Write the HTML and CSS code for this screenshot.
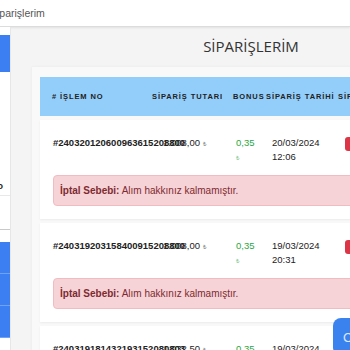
FILE: index.html
```
<!DOCTYPE html>
<html lang="tr">

<head>
    <meta charset="UTF-8">
    <meta name="viewport" content="width=device-width, initial-scale=1.0">
    <title>Siparişlerim</title>
    <link rel="stylesheet" href="styles.css">
</head>

<body>
    <header class="topbar">
        <span class="topbar-title">Siparişlerim</span>
    </header>

    <div class="layout">
        <aside class="sidebar">
            <div class="side-item side-active"></div>
            <div class="side-link">Logo</div>
            <div class="side-rule"></div>
            <div class="side-item side-blue"></div>
            <div class="side-item side-blue"></div>
            <div class="side-item side-blue"></div>
        </aside>

        <main class="content">
            <h1 class="page-title">SİPARİŞLERİM</h1>

            <div class="orders">
                <div class="orders-head">
                    <div># İşlem No</div>
                    <div>Sipariş Tutarı</div>
                    <div>Bonus</div>
                    <div>Sipariş Tarihi</div>
                    <div>Sipariş Durumu</div>
                </div>

                <div class="order">
                    <div class="order-cells">
                        <div class="order-no">#240320120600963615208800</div>
                        <div class="order-amount">1.008,00 <small>₺</small></div>
                        <div class="order-bonus">0,35<br><small>₺</small></div>
                        <div class="order-date">20/03/2024<br>12:06</div>
                        <div><span class="badge">İptal</span></div>
                    </div>
                    <div class="alert"><b>İptal Sebebi:</b> Alım hakkınız kalmamıştır.</div>
                </div>

                <div class="order">
                    <div class="order-cells">
                        <div class="order-no">#240319203158400915208800</div>
                        <div class="order-amount">1.008,00 <small>₺</small></div>
                        <div class="order-bonus">0,35<br><small>₺</small></div>
                        <div class="order-date">19/03/2024<br>20:31</div>
                        <div><span class="badge">İptal</span></div>
                    </div>
                    <div class="alert"><b>İptal Sebebi:</b> Alım hakkınız kalmamıştır.</div>
                </div>

                <div class="order">
                    <div class="order-cells">
                        <div class="order-no">#240319181432193152080803</div>
                        <div class="order-amount">1.032,50 <small>₺</small></div>
                        <div class="order-bonus">0,35<br><small>₺</small></div>
                        <div class="order-date">19/03/2024<br>18:14</div>
                        <div><span class="badge">İptal</span></div>
                    </div>
                </div>
            </div>
        </main>
    </div>

    <button class="chat-button">Canlı Destek</button>
</body>

</html>
```

FILE: styles.css
```
body {
    margin: 0;
    font-family: "Liberation Sans", Arial, sans-serif;
    background-color: #f4f4f4;
    color: #222;
    overflow: hidden;
}

.topbar {
    height: 26px;
    background-color: #fff;
    border-bottom: 1px solid #dcdcdc;
    box-shadow: 0 1px 2px rgba(0, 0, 0, 0.08);
    overflow: hidden;
}

/* başlığın solu ekran dışında kalıyor */
.topbar-title {
    display: block;
    margin-left: -10px;
    font-size: 10.5px;
    line-height: 26px;
    color: #555;
}

.layout {
    display: flex;
}

.sidebar {
    flex: 0 0 10px;
    min-height: 330px;
    background-color: #fff;
    border-right: 1px solid #e6e6e6;
    overflow: hidden;
}

.side-item {
    height: 37px;
    background-color: #3b7ff3;
}

.side-active {
    margin-top: 8px;
}

/* menü yazısı sola taşıyor, sadece son harf görünüyor */
.side-link {
    display: flex;
    justify-content: flex-end;
    margin-top: 108px;
    padding: 0 7px 3px 0;
    border-bottom: 1px solid #e8e8e8;
    font-size: 9px;
    font-weight: bold;
    line-height: 12px;
    white-space: nowrap;
}

.side-rule {
    height: 1px;
    margin-top: 33px;
    background-color: #c9c9c9;
}

.side-blue {
    height: 31px;
    border-bottom: 1px solid #6ea2f6;
}

.side-rule + .side-blue {
    margin-top: 12px;
}

.content {
    flex: 0 0 480px;
}

.page-title {
    margin: 9px 0 11px;
    font-family: "Open Sans", sans-serif;
    font-size: 15px;
    font-weight: 400;
    line-height: 20px;
    text-align: center;
    color: #333;
}

.orders {
    display: flex;
    flex-direction: column;
    gap: 4px;
    margin-left: 21px;
    padding: 10px 0 0 8px;
    background-color: #f9f9f9;
    box-shadow: 0 0 3px rgba(0, 0, 0, 0.05);
}

.orders-head {
    display: grid;
    grid-template-columns: 100px 81px 33px 72px auto;
    align-items: center;
    height: 39px;
    padding-left: 12px;
    background-color: #93cefa;
    font-size: 7.5px;
    font-weight: bold;
    letter-spacing: 0.9px;
    text-transform: uppercase;
    white-space: nowrap;
}

.order {
    padding: 16px 0 13px 13px;
    background-color: #fff;
    box-shadow: 0 1px 2px rgba(0, 0, 0, 0.06);
}

.order-cells {
    display: grid;
    grid-template-columns: 110px 73px 36px 73px auto;
    font-size: 9.5px;
    line-height: 14px;
    white-space: nowrap;
}

.order-no {
    font-weight: bold;
}

.order-cells small {
    font-size: 6px;
    color: #777;
}

.order-bonus {
    color: #28a745;
}

.order-bonus small {
    color: #7bbf8c;
}

.badge {
    display: inline-block;
    padding: 0 5px;
    border-radius: 3px;
    background-color: #dc3545;
    color: #fff;
    font-size: 8px;
    font-weight: bold;
    line-height: 14px;
}

.alert {
    margin-top: 10px;
    padding: 0 6px;
    border: 1px solid #f1bcc1;
    border-radius: 4px;
    background-color: #f6d3d7;
    color: #7e2a31;
    font-size: 10px;
    line-height: 29px;
    white-space: nowrap;
}

.chat-button {
    position: fixed;
    left: 333px;
    top: 318px;
    width: 90px;
    height: 38px;
    padding: 0 0 0 10px;
    border: 0;
    border-radius: 8px;
    background-color: #3a83ee;
    color: #dce9ff;
    font-family: "Liberation Sans", Arial, sans-serif;
    font-size: 13px;
    text-align: left;
    white-space: nowrap;
}
```
